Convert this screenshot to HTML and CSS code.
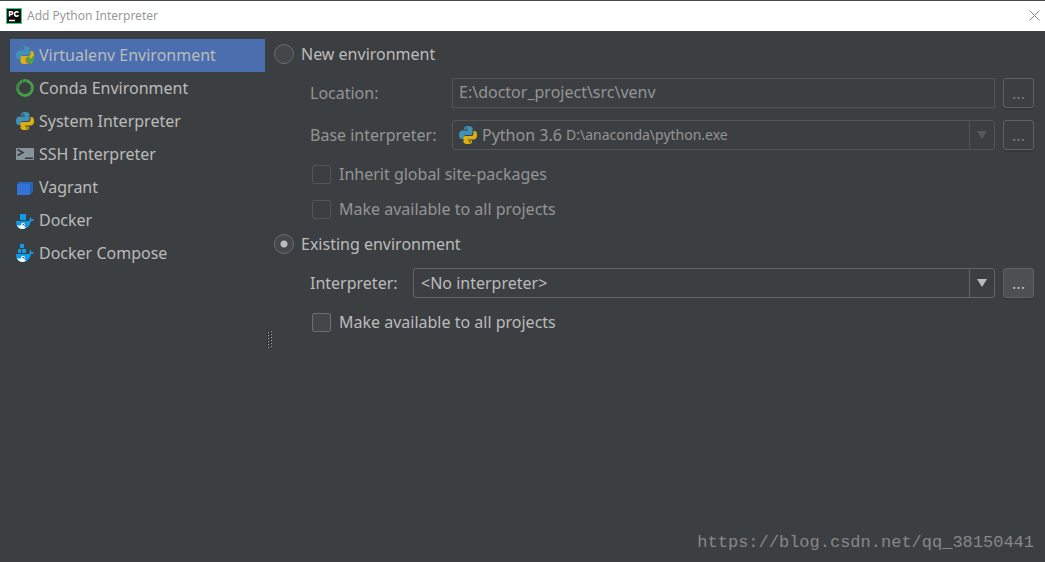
FILE: index.html
```html
<!DOCTYPE html>
<html lang="en">
<head>
    <meta charset="UTF-8">
    <meta name="viewport" content="width=device-width, initial-scale=1.0">
    <title>Add Python Interpreter</title>
    <link rel="stylesheet" href="styles.css">
</head>
<body>
    <!-- Shared icon shapes -->
    <svg class="defs" aria-hidden="true">
        <symbol id="python" viewBox="0 0 18 18">
            <path fill="#4090b8" d="M5 2Q5 0 9 0t4.500 2v5Q13.500 9 12 9H7Q5 9 5 11v2H2.500Q0 13 0 9t3-4.500h6V3.500H5z"/>
            <path fill="#dcb010" d="M13 16q0 2-4 2t-4.500-2v-4.500Q4.500 10 6 10h6q2.500 0 2.500-2.500V5h1Q18 5 18 9t-3 4.500H9v1h4z"/>
            <circle cx="7" cy="2" r="0.800" fill="#3c3f41"/>
            <circle cx="11" cy="16" r="0.800" fill="#3c3f41"/>
        </symbol>
        <symbol id="whale" viewBox="0 0 18 12">
            <path fill="#0d9bea" d="M0 4h12q1.500 0 2-1-1-2 0-3 1.500 1 1.500 2.200 1.500-.3 2.500.5-1 1.500-3 1.600Q13 12 6.500 12 0 12 0 4z"/>
            <path fill="#fff" d="M1 8q3 1.500 5-.5l4 3Q8 12 6.500 12 2.500 12 1 8z"/>
            <circle cx="7" cy="7.500" r="1.800" fill="#fff"/>
            <circle cx="7.300" cy="7.600" r="0.800" fill="#1e5c86"/>
        </symbol>
    </svg>

    <header class="titlebar">
        <svg class="logo" viewBox="0 0 16 16" aria-hidden="true">
            <path fill="#21d789" d="M0 0h16v16H0z"/>
            <path fill="#0b0b0b" d="M1 1h14v14H1z"/>
            <path fill="none" stroke="#fff" stroke-width="1.500" d="M3.500 8.500V3.700h1.700q1.600 0 1.600 1.400T5.200 6.500H4M12.500 4.500q-.8-.9-2-.8-1.900.2-1.900 2.300t2 2.200q1.200 0 1.900-.9M3 12.500h6"/>
        </svg>
        <h1>Add Python Interpreter</h1>
        <button type="button" class="close" aria-label="Close">
            <svg viewBox="0 0 11 11"><path fill="none" stroke="#888" d="M.5.5l10 10M10.500.5l-10 10"/></svg>
        </button>
    </header>

    <div class="content">
        <nav class="sidebar">
            <a href="#virtualenv" class="active">
                <svg viewBox="0 0 18 18">
                    <use href="#python"/>
                    <path fill="none" stroke="#4b6eaf" stroke-width="3" d="M11.500 11l3.500 6 3-6"/>
                    <path fill="none" stroke="#3fb628" stroke-width="2" d="M12 11l3 6 3-6"/>
                </svg>
                Virtualenv Environment
            </a>
            <a href="#conda">
                <svg viewBox="0 0 18 18">
                    <circle cx="9" cy="9" r="7.500" fill="none" stroke="#43a047" stroke-width="2.800"/>
                    <path fill="none" stroke="#3c3f41" stroke-width="1" stroke-dasharray="1 2" d="M10 2.200A6.800 6.800 0 0 0 4 14M7 1A8.200 8.200 0 0 0 1 10"/>
                </svg>
                Conda Environment
            </a>
            <a href="#system">
                <svg viewBox="0 0 18 18"><use href="#python"/></svg>
                System Interpreter
            </a>
            <a href="#ssh">
                <svg viewBox="0 0 18 18">
                    <path fill="#87939a" d="M0 3h18v12H0z"/>
                    <path fill="none" stroke="#34383a" stroke-width="1.500" d="M1.500 4.500L7 7.500l-5.500 3M9 13.300h8"/>
                </svg>
                SSH Interpreter
            </a>
            <a href="#vagrant">
                <svg viewBox="0 0 18 18">
                    <path fill="#2562b4" d="M3 4h14v10l-3 3z"/>
                    <path fill="#3273d8" d="M1 6h13v11H1z"/>
                    <path fill="#2a68c2" d="M3 4h14l-3 2H1z"/>
                </svg>
                Vagrant
            </a>
            <a href="#docker">
                <svg viewBox="0 0 18 18">
                    <path fill="#0d9bea" d="M4 3h6v6H4z"/>
                    <use href="#whale" y="6" width="18" height="12"/>
                </svg>
                Docker
            </a>
            <a href="#compose">
                <svg viewBox="0 0 18 18">
                    <path fill="#0d9bea" d="M4 0h4v4H4zM2 5h3v4H2zM6 5h4v4H6z"/>
                    <use href="#whale" y="6" width="18" height="12"/>
                </svg>
                Docker Compose
            </a>
        </nav>

        <div class="splitter">
            <svg class="grip" viewBox="0 0 6 19" aria-hidden="true">
                <path stroke="#26282a" stroke-dasharray="2 1" d="M1.500 1v18M4.500 0v18"/>
                <path stroke="#b0b0b0" stroke-dasharray="1 2" d="M2.500 2v17M5.500 1v17"/>
            </svg>
        </div>

        <form class="settings">
            <div class="row">
                <input type="radio" name="env" id="newEnv">
                <label for="newEnv">New environment</label>
            </div>
            <fieldset class="group" disabled>
                <div class="row field">
                    <label for="location">Location:</label>
                    <input type="text" id="location" value="E:\doctor_project\src\venv">
                    <button type="button" class="browse">...</button>
                </div>
                <div class="row field">
                    <label for="base">Base interpreter:</label>
                    <div class="combo">
                        <svg class="icon" viewBox="0 0 18 18"><use href="#python"/></svg>
                        <select id="base"><option>Python 3.6</option></select>
                        <span class="path">D:\anaconda\python.exe</span>
                        <span class="arrow"></span>
                    </div>
                    <button type="button" class="browse">...</button>
                </div>
                <div class="row check">
                    <input type="checkbox" id="inherit">
                    <label for="inherit">Inherit global site-packages</label>
                </div>
                <div class="row check">
                    <input type="checkbox" id="shareNew">
                    <label for="shareNew">Make available to all projects</label>
                </div>
            </fieldset>

            <div class="row">
                <input type="radio" name="env" id="existingEnv" checked>
                <label for="existingEnv">Existing environment</label>
            </div>
            <fieldset class="group existing">
                <div class="row field">
                    <label for="interpreter">Interpreter:</label>
                    <div class="combo">
                        <select id="interpreter"><option>&lt;No interpreter&gt;</option></select>
                        <span class="arrow"></span>
                    </div>
                    <button type="button" class="browse">...</button>
                </div>
                <div class="row check">
                    <input type="checkbox" id="shareExisting">
                    <label for="shareExisting">Make available to all projects</label>
                </div>
            </fieldset>
        </form>
    </div>

    <footer class="watermark">https://blog.csdn.net/qq_38150441</footer>
</body>
</html>
```
FILE: styles.css
```css
* {
    box-sizing: border-box;
}
body {
    margin: 0;
    min-height: 100vh;
    display: flex;
    flex-direction: column;
    background-color: #3c3f41;
    color: #bbbbbb;
    font-family: "Noto Sans", "Open Sans", sans-serif;
    font-size: 16px;
    line-height: 22px;
}
input, select, button {
    margin: 0;
    font: inherit;
    color: inherit;
}
.defs {
    position: absolute;
    width: 0;
    height: 0;
}

/* Title bar */
.titlebar {
    display: flex;
    align-items: center;
    gap: 5px;
    height: 31px;
    padding: 0 5px 1px 6px;
    border-top: 1px solid #48494b;
    background: white;
}
.logo {
    width: 16px;
    height: 16px;
}
.titlebar h1 {
    flex: 1;
    margin: 0;
    font-size: 12px;
    font-weight: normal;
    color: #999;
}
.close {
    display: flex;
    padding: 0;
    border: none;
    background: none;
}
.close svg {
    width: 11px;
    height: 11px;
}

.content {
    flex: 1;
    display: flex;
    padding: 8px 11px 0 10px;
}

/* Environment types */
.sidebar {
    width: 255px;
}
.sidebar a {
    display: flex;
    align-items: center;
    gap: 5px;
    height: 33px;
    padding: 0 0 2px 6px;
    color: inherit;
    text-decoration: none;
}
.sidebar a.active {
    background: #4b6eaf;
}
.sidebar svg, .icon {
    width: 18px;
    height: 18px;
}
.splitter {
    width: 9px;
    padding: 291px 0 0 1px;
}
.grip {
    display: block;
    width: 6px;
    height: 19px;
}

/* Form */
.settings {
    flex: 1;
}
.row {
    display: flex;
    align-items: center;
    height: 30px;
}
.row input[type="radio"], .row input[type="checkbox"] {
    appearance: none;
    flex: none;
    border: 1px solid #6b6e70;
    background: #43474a;
}
.row input[type="radio"] {
    width: 20px;
    height: 20px;
    margin-right: 7px;
    border-radius: 50%;
}
.row input[type="radio"]:checked {
    background: radial-gradient(circle, #bbbbbb 3px, #43474a 4px);
}
.row input[type="checkbox"] {
    width: 19px;
    height: 19px;
    margin-right: 8px;
    border-radius: 2px;
}
.group {
    display: flex;
    flex-direction: column;
    min-width: 0;
    margin: 9px 0 5px;
    padding: 0 0 0 36px;
    border: none;
}
.group .field + .field {
    margin-top: 12px;
}
.field + .check {
    margin-top: 9px;
}
.check + .check {
    margin-top: 5px;
}
.check {
    padding-left: 2px;
}
.field label {
    width: 142px;
}
.existing .field label {
    width: 103px;
}
.field input[type="text"] {
    flex: 1;
    min-width: 0;
    height: 30px;
    padding: 0 6px 2px;
    border: 1px solid #646464;
    background: #3c3f41;
}
.combo {
    flex: 1;
    display: flex;
    align-items: center;
    min-width: 0;
    height: 30px;
    border: 1px solid #646464;
    border-radius: 3px;
}
.combo select {
    appearance: none;
    padding: 0;
    border: none;
    outline: none;
    background: #3c3f41;
    opacity: 1;
}
.existing .combo select {
    flex: 1;
    margin-left: 7px;
}
.icon {
    margin: 0 5px 0 6px;
}
.path {
    flex: 1;
    margin-left: 4px;
    font-size: 14px;
}
.arrow {
    display: flex;
    align-items: center;
    justify-content: center;
    width: 25px;
    height: 28px;
    border-left: 1px solid #646464;
}
.arrow::before {
    content: "";
    border: 5px solid transparent;
    border-top: 8px solid #bbbbbb;
    border-bottom: none;
}
.browse {
    width: 31px;
    height: 30px;
    margin-left: 8px;
    padding: 0;
    border: 1px solid #5e6264;
    border-radius: 3px;
    background: #4c5052;
    box-shadow: 0 2px 0 #363839;
}

/* Disabled group */
.group:disabled {
    color: #949494;
}
.group:disabled input, .group:disabled .combo, .group:disabled .arrow {
    border-color: #525455;
}
.group:disabled input[type="checkbox"] {
    background: none;
}
.group:disabled .arrow::before {
    border-top-color: #585858;
}
.group:disabled .browse {
    background: none;
    color: #777;
}

.watermark {
    padding: 0 11px 8px;
    text-align: right;
    font-family: "Liberation Mono", monospace;
    font-size: 17px;
    color: #85878a;
}
```
